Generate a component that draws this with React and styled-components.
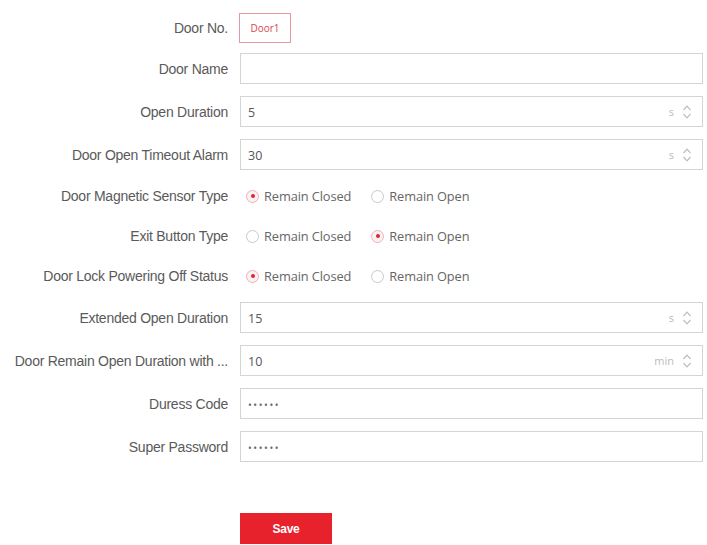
import React from "react";
import styled, { createGlobalStyle } from "styled-components";

const GlobalStyle = createGlobalStyle`
  body {
    margin: 0;
    background: #fff;
    font-family: "Liberation Sans", Arial, sans-serif;
  }
`;

const Spinner = () => (
  <svg width="10" height="16" viewBox="0 0 10 16" fill="none" stroke="#bdbdbd" strokeWidth="1.2">
    <path d="M1.5 6 L5 2.2 L8.5 6" />
    <path d="M1.5 10 L5 13.8 L8.5 10" />
  </svg>
);

const Door = () => {
  const rows = [
    { label: "Door Name", type: "text", value: "" },
    { label: "Open Duration", type: "number", value: "5", unit: "s" },
    { label: "Door Open Timeout Alarm", type: "number", value: "30", unit: "s" },
    { label: "Door Magnetic Sensor Type", type: "radio", checked: 0 },
    { label: "Exit Button Type", type: "radio", checked: 1 },
    { label: "Door Lock Powering Off Status", type: "radio", checked: 0 },
    { label: "Extended Open Duration", type: "number", value: "15", unit: "s" },
    { label: "Door Remain Open Duration with ...", type: "number", value: "10", unit: "min" },
    { label: "Duress Code", type: "password", value: "123456" },
    { label: "Super Password", type: "password", value: "123456" },
  ];
  return (
    <Form>
      <Row $h={28}>
        <Label>Door No.</Label>
        <DoorTag>Door1</DoorTag>
      </Row>
      {rows.map((row) => (
        <Row key={row.label} $h={row.type === "radio" ? 28 : 31}>
          <Label>{row.label}</Label>
          {row.type === "radio" ? (
            <RadioGroup>
              {["Remain Closed", "Remain Open"].map((opt, i) => (
                <RadioOption key={opt}>
                  <RadioDot $on={row.checked === i} />
                  {opt}
                </RadioOption>
              ))}
            </RadioGroup>
          ) : (
            <Field>
              <FieldInput
                type={row.type === "password" ? "password" : "text"}
                defaultValue={row.value}
                readOnly
              />
              {row.unit && (
                <>
                  <Unit>{row.unit}</Unit>
                  <Spinner />
                </>
              )}
            </Field>
          )}
        </Row>
      ))}
      <Actions>
        <SaveButton>Save</SaveButton>
      </Actions>
    </Form>
  );
};

export default function App() {
  return (
    <>
      <GlobalStyle />
      <Door />
    </>
  );
}

const Form = styled.div`
  display: flex;
  flex-direction: column;
  gap: 12px;
  padding: 13px 0 0 6px;
  width: 698px;
`;

const Row = styled.div`
  display: grid;
  grid-template-columns: 222px 463px;
  column-gap: 12px;
  align-items: center;
  height: ${(p) => p.$h}px;
`;

const Label = styled.div`
  text-align: right;
  font-size: 14px;
  letter-spacing: -0.25px;
  color: #5a5a5a;
  white-space: nowrap;
  overflow: hidden;
  text-overflow: ellipsis;
`;

const DoorTag = styled.div`
  justify-self: start;
  height: 30px;
  width: 52px;
  margin-left: -1px;
  box-sizing: border-box;
  border: 1px solid #e39aa0;
  color: #d9474f;
  font-family: "Open Sans", sans-serif;
  font-size: 10px;
  display: flex;
  align-items: center;
  justify-content: center;
`;

const Field = styled.div`
  display: flex;
  align-items: center;
  height: 31px;
  box-sizing: border-box;
  border: 1px solid #d4d4d4;
  padding: 0 10px 0 0;
  gap: 8px;
`;

const FieldInput = styled.input`
  flex: 1;
  min-width: 0;
  border: none;
  outline: none;
  background: transparent;
  padding: 2px 0 0 7px;
  font-family: "Open Sans", sans-serif;
  font-size: 12.5px;
  color: #555;
  &[type="password"] {
    font-size: 10px;
    letter-spacing: 1.6px;
    color: #666;
  }
`;

const Unit = styled.span`
  font-family: "Open Sans", sans-serif;
  font-size: 11px;
  color: #bbb;
`;

const RadioGroup = styled.div`
  display: flex;
  align-items: center;
  gap: 20px;
  padding-left: 6px;
`;

const RadioOption = styled.label`
  display: flex;
  align-items: center;
  gap: 5px;
  font-family: "Open Sans", sans-serif;
  font-size: 12.8px;
  letter-spacing: -0.1px;
  color: #666;
`;

const RadioDot = styled.span`
  width: 13px;
  height: 13px;
  box-sizing: border-box;
  border-radius: 50%;
  border: 1px solid ${(p) => (p.$on ? "#e8b4b8" : "#c8c8c8")};
  background: ${(p) => (p.$on ? "#fdf0f1" : "#fff")};
  display: flex;
  align-items: center;
  justify-content: center;
  &::after {
    content: "";
    display: ${(p) => (p.$on ? "block" : "none")};
    width: 4px;
    height: 4px;
    border-radius: 50%;
    background: #d7263d;
  }
`;

const Actions = styled.div`
  padding: 39px 0 0 234px;
`;

const SaveButton = styled.button`
  width: 92px;
  height: 31px;
  border: none;
  background: #e8222c;
  color: #fff;
  font-family: "Liberation Sans", Arial, sans-serif;
  font-size: 12px;
  font-weight: bold;
  letter-spacing: -0.3px;
`;
